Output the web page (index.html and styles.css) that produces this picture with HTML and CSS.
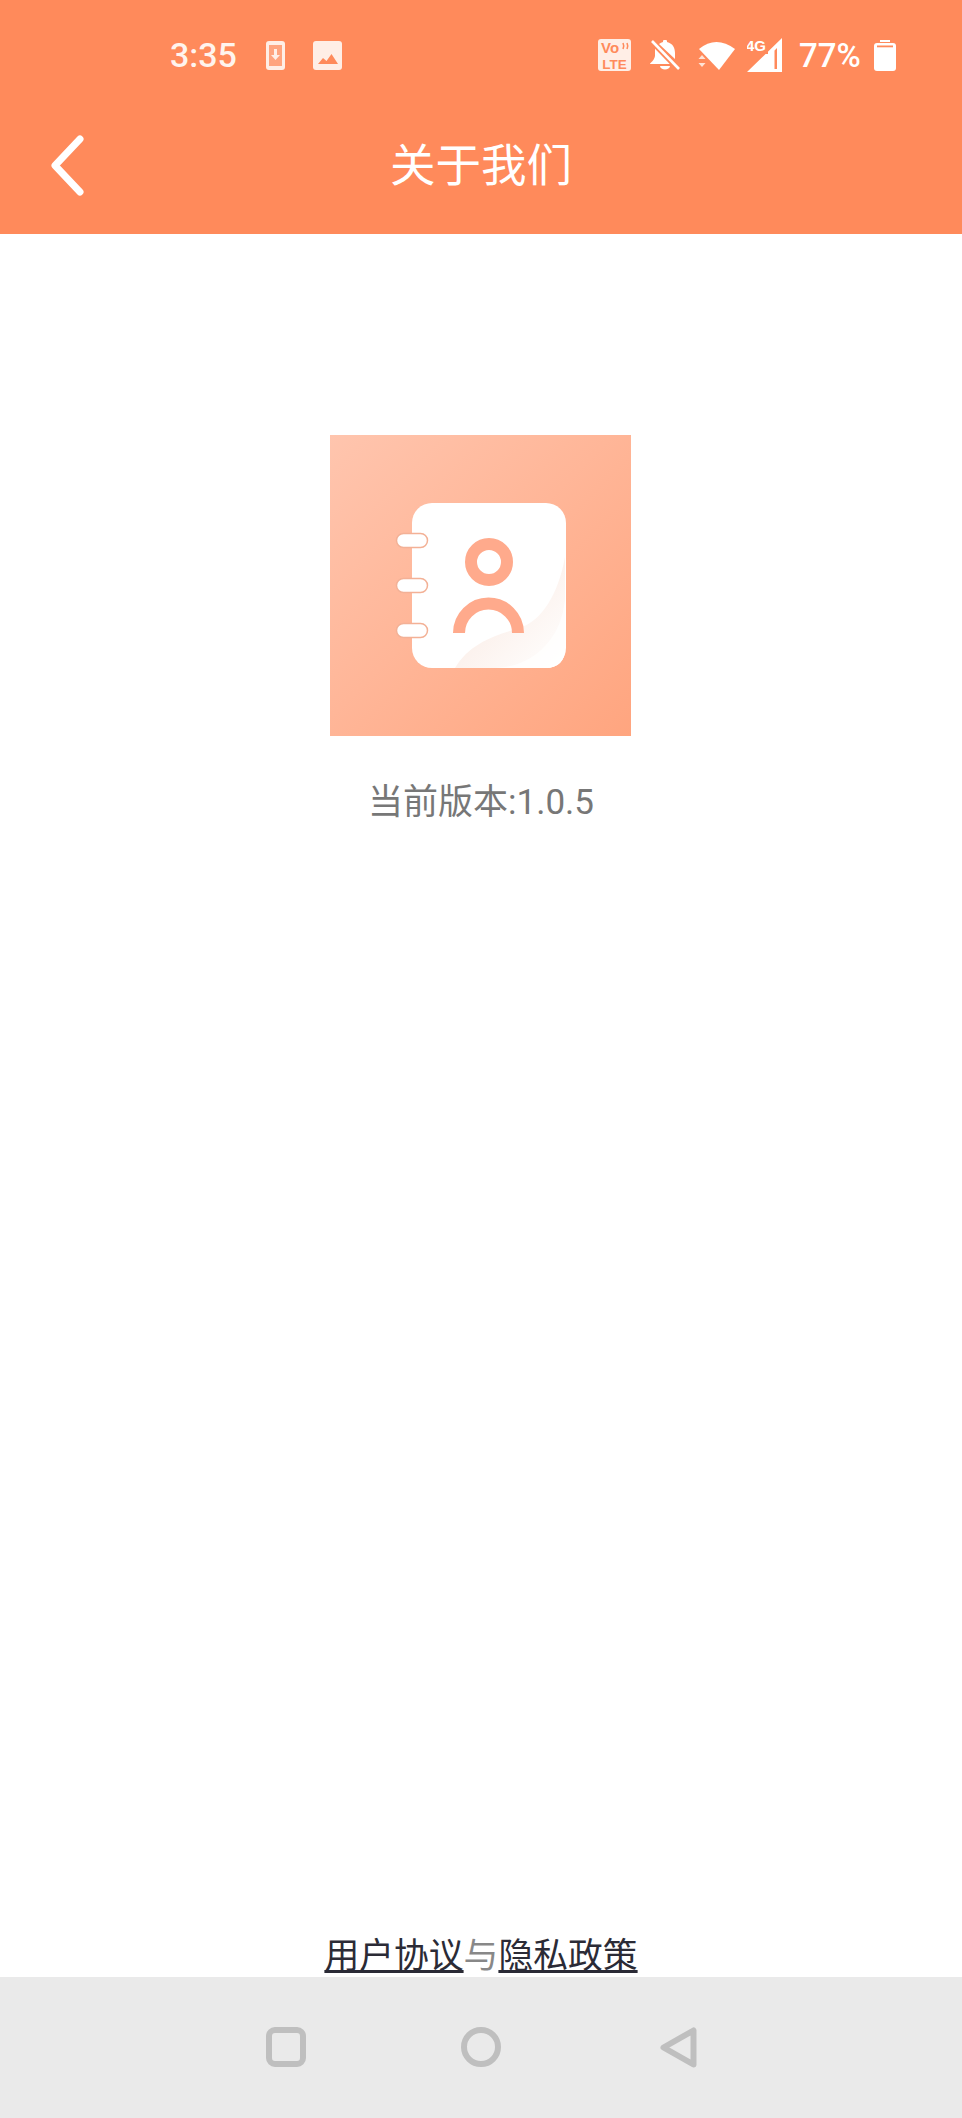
FILE: index.html
```html
<!DOCTYPE html>
<html lang="zh-CN">
<head>
    <meta charset="UTF-8">
    <meta name="viewport" content="width=device-width, initial-scale=1.0">
    <title>关于我们</title>
    <link rel="stylesheet" href="styles.css">
</head>
<body>
    <div class="top-area">
        <!-- status bar -->
        <div class="status-bar">
            <div class="status-left">
                <span class="time">3:35</span>
                <svg class="icon-download" width="19" height="29" viewBox="0 0 19 29">
                    <rect width="19" height="29" rx="3" fill="#ffeee6"/>
                    <rect x="3" y="4" width="13" height="21" fill="#ffa47f"/>
                    <path d="M8 8h3v6h3l-4.500 5-4.500-5h3z" fill="#ffeee6"/>
                </svg>
                <svg class="icon-image" width="29" height="29" viewBox="0 0 29 29">
                    <rect width="29" height="29" rx="3" fill="#ffeee6"/>
                    <path d="M5 23l5-6 3.500 3 5-7L25 23z" fill="#ff8a5b"/>
                </svg>
            </div>
            <div class="status-right">
                <svg class="icon-volte" width="33" height="32" viewBox="0 0 33 32">
                    <rect width="33" height="32" rx="3" fill="#ffeee6"/>
                    <text class="volte-top" x="3" y="14">Vo</text>
                    <path d="M25 4q1.500 3 0 6M29 4q1.500 3 0 6" stroke="#ff8a5b" stroke-width="1.600" fill="none"/>
                    <text class="volte-bottom" x="16.500" y="30" text-anchor="middle">LTE</text>
                </svg>
                <svg class="icon-bell" width="30" height="30" viewBox="0 0 30 30">
                    <path d="M5 7l17 17H0c0-1 4-3 5-8zM9 4q2-1.500 4-2V1c0-1.500 4-1.500 4 0v1c6 1.500 8 6 8 11v6z" fill="#fff"/>
                    <path d="M10 26h10c0 4.500-10 4.500-10 0z" fill="#fff"/>
                    <path d="M2 2l26 27" stroke="#ff8a5b" stroke-width="5"/>
                    <path d="M2 1l27 28" stroke="#fff" stroke-width="2.600"/>
                </svg>
                <svg class="icon-wifi" width="38" height="30" viewBox="0 0 38 30">
                    <path d="M1 9Q18-5 37 9L21 30z" fill="#fff"/>
                    <path d="M4 15l-3.500 4h7zM4 27l-3.500-4h7z" fill="#ffe3d6"/>
                </svg>
                <svg class="icon-signal" width="35" height="34" viewBox="0 0 35 34">
                    <path d="M35 0v34H0zM30 10v21h-2.500V12.500z" fill="#fff" fill-rule="evenodd"/>
                    <rect x="0" y="0" width="21" height="16" fill="#ff8a5b"/>
                    <text x="-1" y="13" class="signal-label">4G</text>
                </svg>
                <span class="battery-text">77%</span>
                <svg class="icon-battery" width="22" height="31" viewBox="0 0 22 31">
                    <path d="M6 0h10v2H6z" fill="#fff"/>
                    <rect y="3" width="22" height="28" rx="3" fill="#fff"/>
                    <rect x="3" y="5.500" width="16" height="1.800" fill="#ff8a5b"/>
                </svg>
            </div>
        </div>

        <!-- header -->
        <div class="toolbar">
            <svg class="back-icon" width="35" height="61" viewBox="0 0 35 61">
                <path d="M30 4L5 30.500 30 57" fill="none" stroke="#fff" stroke-width="7" stroke-linecap="round" stroke-linejoin="round"/>
            </svg>
            <h1 class="toolbar-title">关于我们</h1>
        </div>
    </div>

    <div class="content">
        <svg class="app-logo" width="302" height="302" viewBox="0 0 302 302">
            <defs>
                <linearGradient id="logoBg" x1="0" y1="0" x2="1" y2="1">
                    <stop offset="0" stop-color="#ffc5ae"/>
                    <stop offset="1" stop-color="#ffa57f"/>
                </linearGradient>
                <linearGradient id="foldBg" x1="0" y1="0" x2="1" y2="1">
                    <stop offset="0" stop-color="#f9e6dd"/>
                    <stop offset="1" stop-color="#ffffff"/>
                </linearGradient>
            </defs>
            <rect width="301" height="301" fill="url(#logoBg)"/>
            <rect x="82" y="68" width="154" height="165" rx="20" fill="#fff"/>
            <path d="M125 233C140 208 165 200 190 193C212 185 228 160 235 122V213Q235 233 215 233z" fill="url(#foldBg)"/>
            <path d="M160 233C185 233 205 225 220 205Q232 190 235 165V213Q235 233 215 233z" fill="#fff" opacity="0.7"/>
            <rect class="logo-ring" x="66.500" y="98.500" width="31" height="14" rx="7"/>
            <rect class="logo-ring" x="66.500" y="143.500" width="31" height="14" rx="7"/>
            <rect class="logo-ring" x="66.500" y="188.500" width="31" height="14" rx="7"/>
            <circle cx="159" cy="127" r="18" fill="none" stroke="#ffaa8c" stroke-width="12"/>
            <path d="M129 198a29.500 29.500 0 0 1 59 0" fill="none" stroke="#ffaa8c" stroke-width="12"/>
        </svg>
        <p class="version">当前版本:1.0.5</p>

        <div class="agreement">
            <a class="agreement-link">用户协议</a><span class="agreement-and">与</span><a class="agreement-link">隐私政策</a>
        </div>
    </div>

    <!-- nav bar -->
    <div class="nav-bar">
        <svg class="nav-square" width="40" height="40" viewBox="0 0 40 40">
            <rect x="3" y="3" width="34" height="34" rx="6" fill="none" stroke="#bfbfbf" stroke-width="6"/>
        </svg>
        <svg class="nav-circle" width="40" height="40" viewBox="0 0 40 40">
            <circle cx="20" cy="20" r="17" fill="none" stroke="#bfbfbf" stroke-width="6"/>
        </svg>
        <svg class="nav-back" width="37" height="41" viewBox="0 0 37 41">
            <path d="M33.500 3.500v34L3.500 20.500z" fill="none" stroke="#bfbfbf" stroke-width="6" stroke-linejoin="round"/>
        </svg>
    </div>
</body>
</html>
```

FILE: styles.css
```css
* {
    box-sizing: border-box;
}

body {
    margin: 0;
    height: 100vh;
    display: flex;
    flex-direction: column;
    font-family: Roboto, "Noto Sans CJK SC", sans-serif;
    background: #fff;
}

svg {
    display: block;
    flex-shrink: 0;
}

.top-area {
    background: #ff8a5b;
    color: #fff;
}

/* status bar */
.status-bar {
    height: 110px;
    display: flex;
    align-items: center;
    justify-content: space-between;
    padding: 0 66px 0 170px;
}

.status-left,
.status-right {
    display: flex;
    align-items: center;
}

.time {
    font-size: 34px;
    font-weight: 500;
    width: 66px;
    white-space: nowrap;
    color: #fff4ee;
}

.icon-download {
    margin-left: 30px;
}

.icon-image {
    margin-left: 28px;
}

.icon-bell {
    margin-left: 19px;
}

.icon-wifi {
    margin-left: 18px;
}

.icon-signal {
    margin-left: 11px;
}

.battery-text {
    margin-left: 17px;
    width: 64px;
    font-size: 33px;
    font-weight: 500;
    white-space: nowrap;
}

.icon-battery {
    margin-left: 11px;
}

.volte-top {
    font: bold 15px "Liberation Sans", sans-serif;
    fill: #ff8a5b;
}

.volte-bottom {
    font: bold 13.500px "Liberation Sans", sans-serif;
    fill: #ff8a5b;
}

.signal-label {
    font: bold 15px "Liberation Sans", sans-serif;
    fill: #fff;
}

/* header */
.toolbar {
    height: 124px;
    display: flex;
    align-items: flex-start;
    justify-content: center;
    position: relative;
}

.back-icon {
    position: absolute;
    left: 50px;
    top: 25px;
}

.toolbar-title {
    margin: 24px 0 0;
    font-size: 45.500px;
    line-height: 56px;
    font-weight: 400;
    font-family: "Noto Sans CJK SC", sans-serif;
}

/* content */
.content {
    flex: 1;
    display: flex;
    flex-direction: column;
    align-items: center;
    padding-top: 201px;
}

.version {
    margin: 44px 0 0;
    font-size: 35px;
    line-height: 44px;
    color: #777;
}

.logo-ring {
    fill: #fff;
    stroke: #f3b196;
    stroke-width: 1.500;
}

.agreement {
    margin-top: auto;
    margin-bottom: 2px;
    font-family: "Noto Sans CJK SC", sans-serif;
    font-size: 34.800px;
    line-height: 44px;
    white-space: nowrap;
}

.agreement-link {
    color: #2b2b36;
    text-decoration: underline;
}

.agreement-and {
    color: #888;
}

/* nav bar */
.nav-bar {
    height: 141px;
    background: #eaeaea;
    display: flex;
    align-items: flex-start;
    justify-content: center;
    padding-top: 50px;
}

.nav-circle {
    margin-left: 155px;
}

.nav-back {
    margin-left: 159px;
}
```
